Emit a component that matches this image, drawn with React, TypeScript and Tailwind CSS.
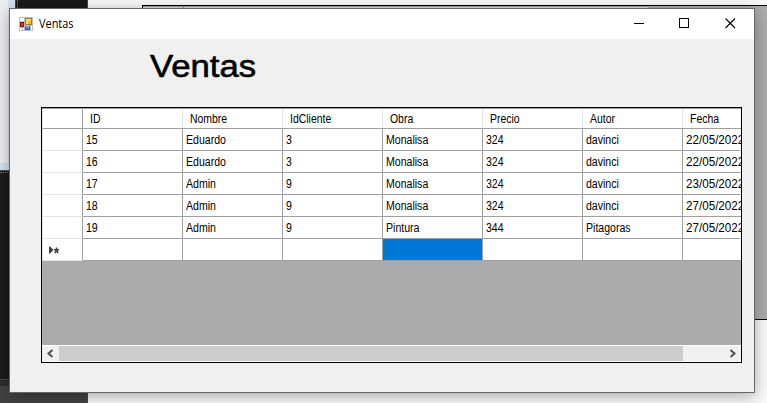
import type { ReactNode } from "react";

const columns = ["ID", "Nombre", "IdCliente", "Obra", "Precio", "Autor", "Fecha"];
const rows = [
  ["15", "Eduardo", "3", "Monalisa", "324", "davinci", "22/05/2022"],
  ["16", "Eduardo", "3", "Monalisa", "324", "davinci", "22/05/2022"],
  ["17", "Admin", "9", "Monalisa", "324", "davinci", "23/05/2022"],
  ["18", "Admin", "9", "Monalisa", "324", "davinci", "27/05/2022"],
  ["19", "Admin", "9", "Pintura", "344", "Pitagoras", "27/05/2022"],
];

function Desktop() {
  return (
    <div className="absolute inset-0 bg-[#f8f8f8]">
      <div className="absolute left-0 top-0 h-[171px] w-4 border-b border-[#555] bg-[#d3e2f2]">
        <div className="h-[163px] w-2 bg-[#efefef]" />
      </div>
      <div className="absolute left-[15px] top-0 h-3 w-[73px] border-x border-[#444] bg-[#1a1a1a]">
        <div className="ml-px h-3 w-0 border-l border-dotted border-[#777]" />
      </div>
      <div className="absolute left-0 top-[171px] h-[208px] w-3 bg-[#1b1b1b] pt-px">
        <div className="border-t border-dotted border-[#777]" />
      </div>
      <div className="absolute left-0 top-[379px] h-6 w-[88px] border-r border-t border-[#4a4a4a] bg-[#424242]">
        <div className="h-[6px] bg-[#2d2d2d]" />
      </div>
      <div className="absolute left-[142px] top-[5px] h-[315px] w-[640px] border border-black bg-[#ababab]">
        <div className="flex h-[3px] w-[505px] border-t border-[#a0a0a0] bg-[#dcdcdc]">
          <div className="w-[41px] border-r border-[#888]" />
        </div>
      </div>
    </div>
  );
}

function AppIcon() {
  return (
    <svg width="14" height="14" viewBox="0 0 14 14" shapeRendering="crispEdges">
      <path fill="#bdbdbd" d="M0 0h14v14H0z" />
      <path fill="#fff" d="M1 1h4v3H1zM1 11h2v2H1zM4 11h1v2H4zM12 9h1v4h-1z" />
      <path fill="#a87a10" d="M6 1h7v7H6z" />
      <path fill="#ffdc62" d="M7 2h5v5H7z" />
      <path fill="#f6bd28" d="M9 4h3v3H9z" />
      <path fill="#8f1515" d="M1 5h4v5H1z" />
      <path fill="#d93a2b" d="M2 6h2v3H2z" />
      <path fill="#3566c4" d="M6 9h5v4H6z" />
      <path fill="#7faaf0" d="M7 9h3v2H7z" />
    </svg>
  );
}

function TitleBar() {
  return (
    <div className="flex h-[30px] items-center bg-white pl-[9px]">
      <AppIcon />
      <span className="ml-[6px] origin-left scale-x-[0.91] text-[12px] leading-[14px] text-black [font-family:'Open_Sans',sans-serif]">Ventas</span>
      <div className="ml-auto flex h-full">
        <svg width="138" height="30" viewBox="0 0 138 30" fill="none" stroke="#000">
          <path d="M18 14.5h10M63.5 9.5h9v9h-9z" shapeRendering="crispEdges" />
          <path d="M109.5 9.5l9.5 9.5M119 9.5l-9.5 9.5" strokeWidth="1.1" />
        </svg>
      </div>
    </div>
  );
}

function Cell({ children, selected, wide }: { children?: ReactNode; selected?: boolean; wide?: boolean }) {
  return (
    <div className={`h-[22px] w-[100px] shrink-0 border-b border-r border-[#a0a0a0] pl-[3px] leading-[22px] ${selected ? "bg-[#0078d7]" : "bg-white"}`}>
      <span className={`block w-max origin-left ${wide ? "scale-x-[0.97]" : "scale-x-[0.88]"}`}>{children}</span>
    </div>
  );
}

function Grid() {
  return (
    <div className="ml-[31px] mt-[11px] flex h-[256px] w-[701px] flex-col overflow-hidden border border-black bg-[#ababab] text-[12px] text-black [font-family:'Liberation_Sans',Arial,sans-serif]">
      <div className="flex-1">
        <div className="flex h-[21px] w-max border-b border-t border-[#a0a0a0] bg-white">
          <div className="w-[41px] border-l border-r border-l-[#e3e3e3] border-r-[#a0a0a0]" />
          {columns.map((name) => (
            <div key={name} className="w-[100px] border-r border-[#e3e3e3] pl-[7px] leading-[20px]">
              <span className="block w-max origin-left scale-x-[0.87]">{name}</span>
            </div>
          ))}
        </div>
        {rows.map((row) => (
          <div key={row[0]} className="flex w-max">
            <div className="h-[22px] w-[41px] border-b border-l border-r border-[#e3e3e3] border-r-[#a0a0a0] bg-white" />
            {row.map((value, i) => <Cell key={i} wide={i === 6}>{value}</Cell>)}
          </div>
        ))}
        <div className="flex w-max">
          <div className="flex h-[22px] w-[41px] items-center border-b border-l border-r border-[#e3e3e3] border-r-[#a0a0a0] bg-white pl-[6px]">
            <svg width="11" height="8" viewBox="0 0 11 8" fill="#404040">
              <path d="M0 0.5h1L4.5 4L1 7.5H0z" />
              <path d="M7.5 1.5V4.5M5 3.5L7.5 4.5L10 3.5M5.8 7L7.5 4.5L9.2 7" fill="none" stroke="#404040" strokeWidth="1.5" />
            </svg>
          </div>
          {columns.map((name) => <Cell key={name} selected={name === "Obra"} />)}
        </div>
      </div>
      <div className="flex h-[17px] items-center border-y border-white bg-[#f0f0f0]">
        <svg width="17" height="15" viewBox="0 0 17 15" fill="none" stroke="#505050" strokeWidth="2">
          <path d="M10.5 4L6.5 7.5L10.5 11" />
        </svg>
        <div className="h-full w-[624px] bg-[#cdcdcd]" />
        <svg className="ml-auto" width="17" height="15" viewBox="0 0 17 15" fill="none" stroke="#505050" strokeWidth="2">
          <path d="M6.5 4L10.5 7.5L6.5 11" />
        </svg>
      </div>
    </div>
  );
}

export default function App() {
  return (
    <main className="relative h-[403px] w-[767px] overflow-hidden">
      <Desktop />
      <section className="absolute left-[9px] top-[8px] h-[385px] w-[746px] border border-[#666] bg-[#f0f0f0] shadow-[0_3px_14px_rgba(0,0,0,0.32)]">
        <TitleBar />
        <h1 className="ml-[140px] mt-[9px] h-[48px] w-max origin-left scale-x-[1.085] text-[32px] leading-[36px] text-black [font-family:'Liberation_Sans',Arial,sans-serif] [-webkit-text-stroke:0.6px_#000]">Ventas</h1>
        <Grid />
      </section>
    </main>
  );
}
